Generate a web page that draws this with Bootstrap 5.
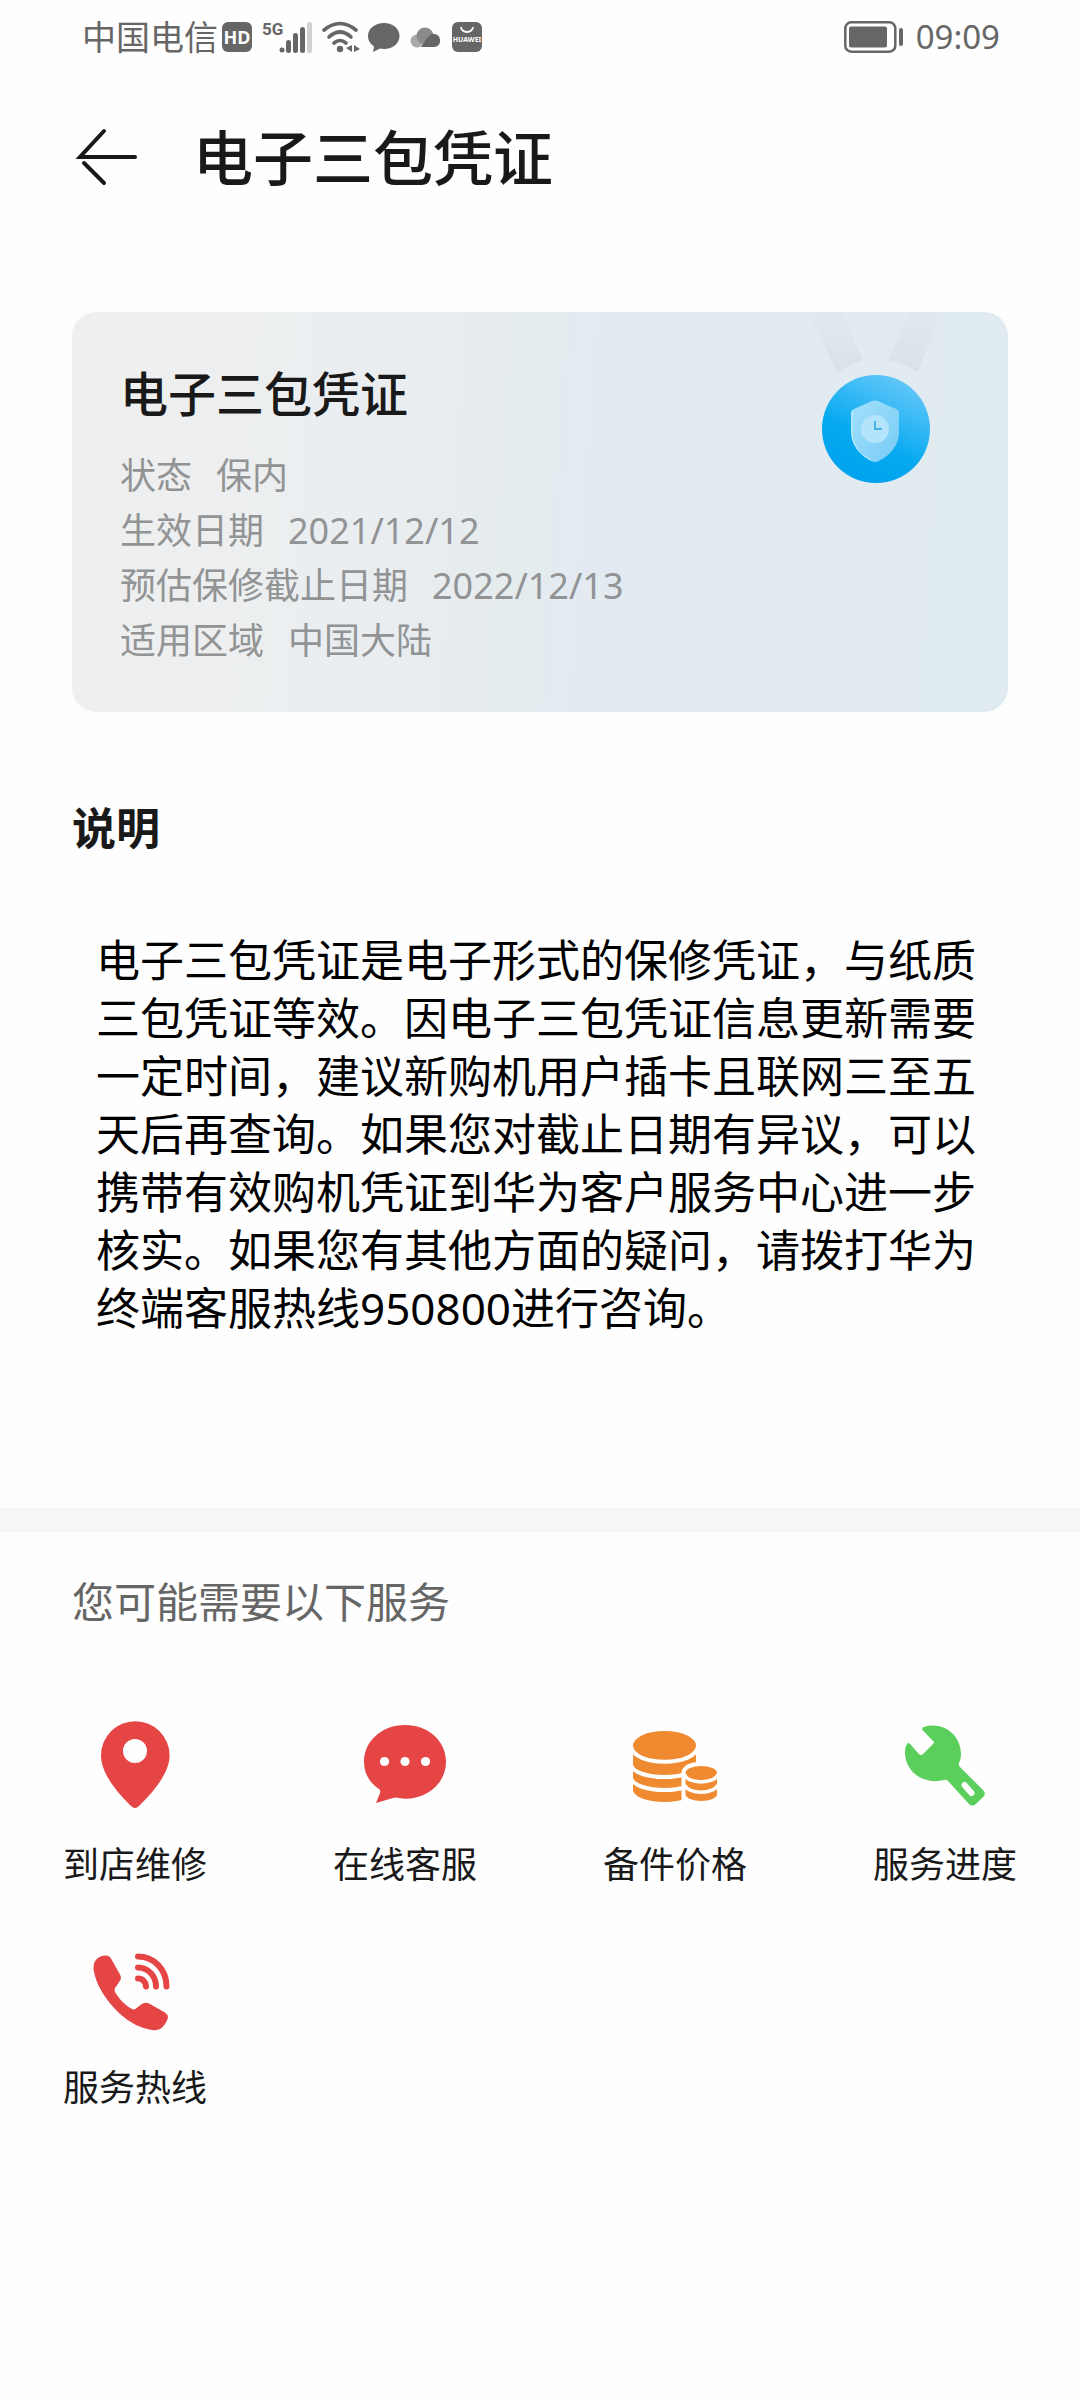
<!DOCTYPE html>
<html lang="zh-CN">
<head>
<meta charset="utf-8">
<meta name="viewport" content="width=device-width, initial-scale=1">
<title>电子三包凭证</title>
<link href="https://cdn.jsdelivr.net/npm/bootstrap@5.3.0/dist/css/bootstrap.min.css" rel="stylesheet">
<style>
  body { font-family: "Noto Sans", "Noto Sans CJK SC", sans-serif; color: #191919; background: #fefefe; }
  svg { display: block; flex: none; overflow: visible; }
  .status-bar { height: 74px; padding: 0 80px 0 82px; color: #666; font-size: 34px; line-height: 40px; }
  .status-icons { gap: 8px; }
  .status-icons svg text { font-family: "Noto Sans", sans-serif; font-weight: 700; }
  .status-icons svg .net-label { font-family: "Liberation Sans Narrow", "Roboto", sans-serif; }
  .carrier { margin-right: -4px; }
  .clock { gap: 12px; font-size: 33px; }
  .title-bar { height: 168px; padding: 0 72px; gap: 49px; }
  .title-bar h1 { font-size: 60px; line-height: 80px; font-weight: 500; }
  .page-body { padding: 0 72px; }
  .voucher { margin-top: 70px; padding: 0 60px 44px 48px; border-radius: 24px;
    background: linear-gradient(94deg, #efefef 0%, #ebeef0 28%, #e5ecee 49%, #e3eaf2 55%, #e1ebf1 75%, #e0ebf0 100%); }
  .voucher-text { padding-top: 52px; }
  .voucher h2 { font-size: 48px; line-height: 60px; font-weight: 500; margin-bottom: 24px; }
  .facts { font-size: 36px; line-height: 55px; color: #919394; }
  .facts > div { gap: 24px; }
  .note-title { font-size: 44px; line-height: 60px; font-weight: 700; margin: 86px 0 73px; }
  .note-text { font-size: 44px; line-height: 58px; color: #000; padding: 0 24px; margin-bottom: 171px; }
  .divider { height: 24px; background: #f6f6f6; }
  .service-title { font-size: 42px; line-height: 60px; font-weight: 400; color: #666; padding: 0 72px; margin: 40px 0 84px; }
  .services { row-gap: 47px; }
  .service { font-size: 36px; line-height: 54px; color: #191919; gap: 26px; }
</style>
</head>
<body>
<div class="status-bar d-flex justify-content-between align-items-center">
  <div class="status-icons d-flex align-items-center">
    <span class="carrier">中国电信</span>
    <svg width="30" height="32" viewBox="0 0 30 32" aria-label="HD"><rect y="1" width="30" height="30" rx="6" fill="#666"/><text x="15" y="23" font-size="18" text-anchor="middle" fill="#fff">HD</text></svg>
    <svg width="52" height="32" viewBox="0 0 52 32" fill="#666"><text class="net-label" x="2" y="14" font-size="17">5G</text><circle cx="22" cy="29" r="2.5"/><rect x="26" y="19" width="5" height="13" rx="2.5"/><rect x="33" y="12" width="5" height="20" rx="2.5"/><rect x="40" y="6" width="5" height="26" rx="2.5"/><rect x="47" y="1" width="5" height="31" rx="2" fill="#d2d2d2"/></svg>
    <svg width="40" height="32" viewBox="0 0 40 32" fill="none" stroke="#666" stroke-width="3.6" stroke-linecap="round"><path d="M4 9Q20-4 36 9M9 16Q20 6 31 16M14 22Q20 17 26 22"/><circle cx="20" cy="28" r="3.2" fill="#666" stroke="none"/><path d="M32 24v7l-6-4zM34 31v-7l6 4z" fill="#666" stroke="none"/></svg>
    <svg width="32" height="32" viewBox="0 0 32 32" fill="#666"><path d="M16 2C7 2 0 7.500 0 15c0 4.500 2.500 8 6 10.500L5 31l7-3.500c1.300.3 2.600.5 4 .5 9 0 15.500-5.700 15.500-13S25 2 16 2z"/></svg>
    <svg width="36" height="32" viewBox="0 0 36 32"><circle cx="9" cy="20" r="6.500" fill="#a9a9a9"/><circle cx="17" cy="15" r="8.500" fill="#8b8b8b"/><path d="M13 26c2-3 4-7 8-11a6 6 0 0 1 5-2c4 0 6 3 6 7s-3 6-7 6z" fill="#666"/></svg>
    <svg width="30" height="32" viewBox="0 0 30 32" aria-label="HUAWEI"><rect y="1" width="30" height="30" rx="6" fill="#666"/><path d="M9 6a6 5 0 0 0 12 0" fill="none" stroke="#fff" stroke-width="1.800"/><text x="15" y="21" font-size="7" text-anchor="middle" fill="#fff">HUAWEI</text></svg>
  </div>
  <div class="clock d-flex align-items-center">
    <svg width="60" height="32" viewBox="0 0 60 32"><rect x="1.300" y="1.300" width="50" height="29.400" rx="6" fill="none" stroke="#666" stroke-width="2.500"/><rect x="5" y="5.500" width="38" height="21" rx="2" fill="#666"/><rect x="55" y="7" width="4" height="18" rx="2" fill="#666"/></svg>
    <span>09:09</span>
  </div>
</div>

<header class="title-bar d-flex align-items-center">
  <button type="button" class="btn p-0 border-0" aria-label="返回">
    <svg width="72" height="60" viewBox="0 0 72 60" fill="none" stroke="#191919" stroke-width="4" stroke-linecap="round"><path d="M32 3L8 29H63M12 35L32 55"/></svg>
  </button>
  <h1 class="m-0">电子三包凭证</h1>
</header>

<main>
  <div class="page-body">
    <section class="voucher d-flex justify-content-between align-items-start">
      <div class="voucher-text">
        <h2>电子三包凭证</h2>
        <div class="facts">
          <div class="d-flex"><span>状态</span><span>保内</span></div>
          <div class="d-flex"><span>生效日期</span><span>2021/12/12</span></div>
          <div class="d-flex"><span>预估保修截止日期</span><span>2022/12/13</span></div>
          <div class="d-flex"><span>适用区域</span><span>中国大陆</span></div>
        </div>
      </div>
      <svg width="144" height="176" viewBox="0 0 144 176" aria-hidden="true">
        <defs>
          <linearGradient id="disc" x1="0.750" y1="0.100" x2="0.350" y2="0.900"><stop offset="0" stop-color="#5cc5f8"/><stop offset="0.650" stop-color="#07aaf0"/><stop offset="1" stop-color="#00a4ee"/></linearGradient>
          <linearGradient id="shield" x1="0" y1="0" x2="1" y2="1"><stop offset="0" stop-color="#a3e0fb"/><stop offset="1" stop-color="#77cbf5"/></linearGradient>
          <linearGradient id="ribbon" x1="0" y1="0" x2="0" y2="1"><stop offset="0" stop-color="#dce6ea" stop-opacity="0.400"/><stop offset="1" stop-color="#d8e2e6"/></linearGradient>
        </defs>
        <path d="M4 0H38L59 48Q44 53 33 61ZM106 0H139L113 60Q100 51 84 48Z" fill="url(#ribbon)"/>
        <circle cx="72" cy="117" r="54" fill="url(#disc)"/>
        <path d="M68 89q3-1 6 0l18 8q3 1 3 4v19c0 14-9 23-20 29q-4 2-8 0C56 143 47 133 47 120v-19q0-3 3-4z" fill="url(#shield)"/>
        <path d="M48 100v20c0 13 8 23 19 28" fill="none" stroke="#c4f2ff" stroke-width="1"/>
        <circle cx="71" cy="117" r="14" fill="#b3e4fb"/>
        <path d="M71 109v8h7" fill="none" stroke="#46b4e8" stroke-width="2"/>
      </svg>
    </section>
    <h2 class="note-title">说明</h2>
    <p class="note-text">电子三包凭证是电子形式的保修凭证，与纸质三包凭证等效。因电子三包凭证信息更新需要一定时间，建议新购机用户插卡且联网三至五天后再查询。如果您对截止日期有异议，可以携带有效购机凭证到华为客户服务中心进一步核实。如果您有其他方面的疑问，请拨打华为终端客服热线950800进行咨询。</p>
  </div>
  <div class="divider"></div>
  <h2 class="service-title">您可能需要以下服务</h2>
  <nav class="services row g-0" aria-label="服务">
    <a href="#" class="service col-3 d-flex flex-column align-items-center text-decoration-none">
      <svg width="96" height="96" viewBox="0 0 96 96"><path fill="#e54545" fill-rule="evenodd" d="M48 92c-2 0-4-2-6-4C30 76 14 57 14 39.500a34.300 34.300 0 0 1 68.600 0C82.600 57 66 76 54 88c-2 2-4 4-6 4zM48 23a12 12 0 1 0 0 24 12 12 0 0 0 0-24z"/></svg>
      <span>到店维修</span></a>
    <a href="#" class="service col-3 d-flex flex-column align-items-center text-decoration-none">
      <svg width="96" height="96" viewBox="0 0 96 96"><path fill="#e54545" d="M48 9C25 9 7 25 7 46c0 12 6 21 15 27q2 2 1 4l-4 10 17-5q3-1 6 0 3 .8 6 .8c23 0 41-16 41-37S71 9 48 9z"/><g fill="#fff"><circle cx="27.500" cy="45.500" r="4.600"/><circle cx="48" cy="45.500" r="4.600"/><circle cx="68.500" cy="45.500" r="4.600"/></g></svg>
      <span>在线客服</span></a>
    <a href="#" class="service col-3 d-flex flex-column align-items-center text-decoration-none">
      <svg width="96" height="96" viewBox="0 0 96 96"><path fill="#f08a30" d="M6 29.500a31.500 14.500 0 0 1 63 0V74a31.500 12 0 0 1-63 0z"/><path fill="none" stroke="#fefefe" stroke-width="4" d="M4 30c2 21 65 21 67 0M4 49c4 16 63 16 67 0M4 62c4 16 63 16 67 0"/><path fill="#fefefe" d="M54.500 90V57c0-15 39-15 39 0v33z"/><path fill="#f08a30" d="M58.500 57a15.700 7 0 0 1 31.500 0v21a15.700 7 0 0 1-31.500 0z"/><path fill="none" stroke="#fefefe" stroke-width="3.500" d="M57.500 58c2 10.500 31 10.500 33.500 0M57.500 69c4 9.500 29 9.500 33.500 0"/></svg>
      <span>备件价格</span></a>
    <a href="#" class="service col-3 d-flex flex-column align-items-center text-decoration-none">
      <svg width="96" height="96" viewBox="0 0 96 96"><path fill="#5bcf5b" d="M25.500 14q-1-2 1-3C45 5 64 18 64 38q0 5-2 9-1 2 1 4l23 23q3 3 1 6l-8 8q-4 3-7 0L51 65q-1-2-4-1C28 69 8 57 8 36q0-5 2-8 1-2 3 0l9 10q2 2 4 0l10-10q2-2 0-3z"/><path d="M67.500 69l7 8" stroke="#fefefe" stroke-width="6" stroke-linecap="round"/></svg>
      <span>服务进度</span></a>
    <a href="#" class="service col-3 d-flex flex-column align-items-center text-decoration-none">
      <svg width="96" height="96" viewBox="0 0 96 96"><path fill="#e54545" d="M7 25c1-5 6-8 11-8.500q4-.5 6 3l9 16q2 4-.5 7L28 49q-1 2 0 4c4 7 10 13 17 17q2 1 4-.5l5-4q4-3 8-1l16 9q3 2 3 5-2 7-7 11-4 2.500-9 1.500-17-2.500-32-16C17 60 8 43 6.500 30q0-3 .5-5z"/><g fill="none" stroke="#e54545" stroke-width="6" stroke-linecap="round"><path d="M51 17.500c16 0 28.500 13 28.500 30M51 28.500c10 0 18 8.500 18 19M51 39.500c4.500 0 8 3.500 8 8"/></g></svg>
      <span>服务热线</span></a>
  </nav>
</main>
<script src="https://cdn.jsdelivr.net/npm/bootstrap@5.3.0/dist/js/bootstrap.bundle.min.js"></script>
</body>
</html>
